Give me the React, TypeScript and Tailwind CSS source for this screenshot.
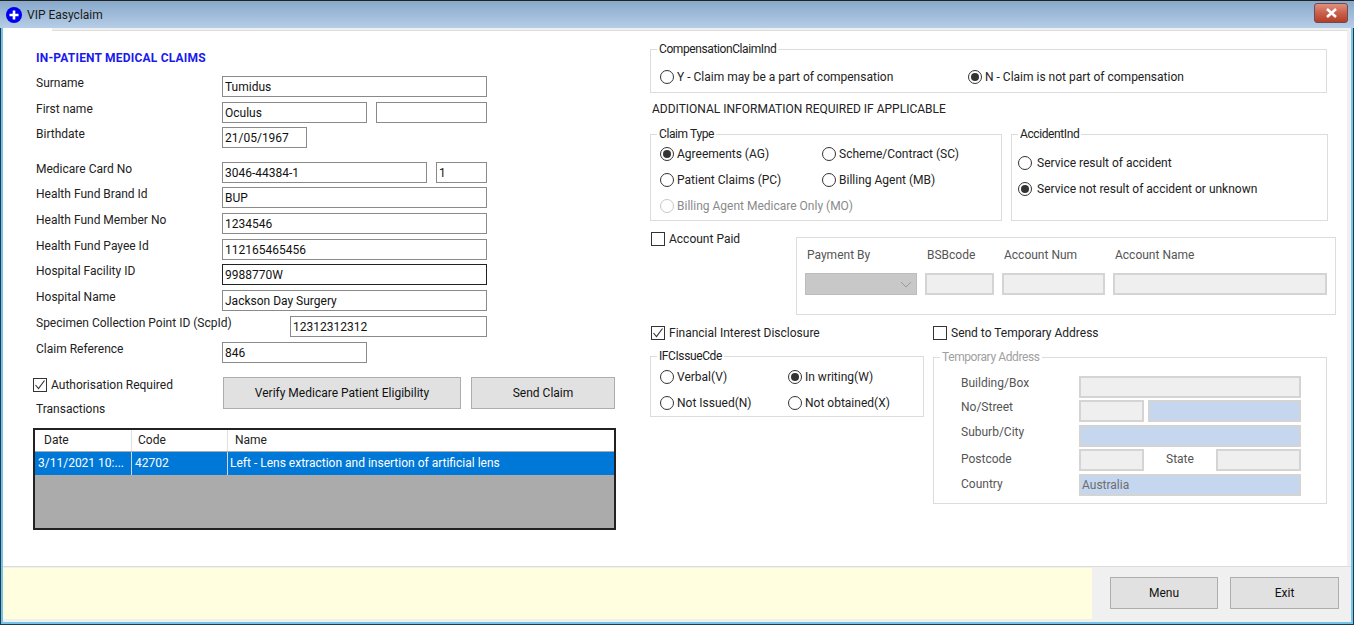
import React from "react";

const Field = ({ w, value = "", strong = false }: { w: string; value?: string; strong?: boolean }) => (
  <div className={`${w} h-[21px] shrink-0 border ${strong ? "border-[#222]" : "border-[#8a8a8a]"} pl-[2px] leading-[20px] text-[12px] text-[#111] bg-white overflow-hidden whitespace-nowrap`}>
    {value}
  </div>
);

const Off = ({ w, blue = false, value = "" }: { w: string; blue?: boolean; value?: string }) => (
  <div className={`${w} h-[22px] shrink-0 border-2 border-[#d4d4d4] ${blue ? "bg-[#c5d7ef]" : "bg-[#efefef]"} pl-[1px] leading-[18px] text-[12px] text-[#6d6d6d]`}>
    {value}
  </div>
);

const Row = ({ label, mt, children, lw = "w-[187px]" }: { label: string; mt: string; children: React.ReactNode; lw?: string }) => (
  <div className={`flex h-[21px] ${mt}`}>
    <div className={`${lw} shrink-0 pl-[1px] leading-[15px] whitespace-nowrap`}>{label}</div>
    <div className="flex gap-[9px]">{children}</div>
  </div>
);

const Radio = ({ label, on = false, off = false, w, gap = "ml-[3px]" }: { label: string; on?: boolean; off?: boolean; w?: string; gap?: string }) => (
  <div className={`flex items-center h-[16px] ${w ?? ""} ${off ? "text-[#8a8a8a]" : ""}`}>
    <span className={`w-[14px] h-[14px] shrink-0 rounded-full border ${off ? "border-[#c8c8c8]" : "border-[#333]"} flex items-center justify-center`}>
      {on && <span className="w-[8px] h-[8px] rounded-full bg-[#333]" />}
    </span>
    <span className={`${gap} whitespace-nowrap`}>{label}</span>
  </div>
);

const Check = ({ label, on = false }: { label: string; on?: boolean }) => (
  <div className="flex items-center h-[15px]">
    <span className="w-[14px] h-[14px] shrink-0 border border-[#333] bg-white flex items-center justify-center">
      {on && (
        <svg width="12" height="12" viewBox="0 0 12 12" fill="none" stroke="#333" strokeWidth="1.1">
          <path d="M1.5 6 L4.5 9.5 L10.5 1.5" />
        </svg>
      )}
    </span>
    <span className="ml-[4px] whitespace-nowrap">{label}</span>
  </div>
);

const Group = ({ title, cls, children, off = false }: { title: string; cls: string; children?: React.ReactNode; off?: boolean }) => (
  <div className={`relative border border-[#dcdcdc] shrink-0 ${cls}`}>
    <span className={`absolute left-[6px] -top-[8px] bg-white px-[2px] leading-[15px] tracking-[-0.4px] whitespace-nowrap ${off ? "text-[#a0a0a0]" : ""}`}>{title}</span>
    {children}
  </div>
);

const Btn = ({ label, cls }: { label: string; cls: string }) => (
  <div className={`${cls} h-[32px] shrink-0 bg-[#e1e1e1] border border-[#adadad] flex items-center justify-center text-[12px] text-[#111]`}>{label}</div>
);

const Addr = ({ label, children, mt = "mt-[3px]", lp = "pt-0" }: { label: string; children: React.ReactNode; mt?: string; lp?: string }) => (
  <div className={`flex h-[22px] ${mt}`}>
    <div className={`w-[118px] shrink-0 leading-[15px] ${lp} text-[#555]`}>{label}</div>
    <div className="flex">{children}</div>
  </div>
);

export default function App() {
  return (
    <div className="w-[1354px] h-[625px] overflow-hidden flex flex-col bg-[#f0f0f0] text-[12px] text-[#222] border-t border-[#222]" style={{ fontFamily: "Roboto, 'Noto Sans', sans-serif" }}>
      {/* Title bar */}
      <div className="h-[27px] shrink-0 flex items-center pl-[6px] pr-[6px] bg-gradient-to-b from-[#88a9cb] to-[#b6cde6]">
        <svg width="16" height="16" viewBox="0 0 16 16" className="shrink-0">
          <circle cx="8" cy="8" r="8" fill="#0000f0" />
          <path d="M8 3.5 V12.5 M3.5 8 H12.5" stroke="#fff" strokeWidth="2.6" />
        </svg>
        <span className="ml-[5px] mt-[1px] text-[12px] text-[#1a1a1a]">VIP Easyclaim</span>
        <div className="ml-auto mt-[-3px] w-[34px] h-[20px] rounded-[3px] border border-[#6e4a55] bg-gradient-to-b from-[#e08f7f] via-[#c9604c] to-[#b43d24] flex items-center justify-center">
          <svg width="13" height="10" viewBox="0 0 13 10" stroke="#fff" strokeWidth="2.6">
            <path d="M2 1 L11 9 M11 1 L2 9" />
          </svg>
        </div>
      </div>

      {/* Body with the window edges */}
      <div className="flex-1 min-h-0 flex flex-col border-x border-b border-[#1f3b50]">
        <div className="flex-1 min-h-0 flex flex-col border-x-2 border-b-2 border-[#74c3e8]">
          <div className="h-[3px] shrink-0 flex">
            <div className="w-[49px] bg-white" />
            <div className="flex-1 border-b border-[#dedede] bg-[#f0f0f0]" />
            <div className="w-[4px]" />
          </div>
          <div className="h-[535px] shrink-0 mr-[4px] bg-white flex">
            {/* Left */}
            <div className="w-[647px] shrink-0 pl-[30px]">
              <div className="mt-[20px] ml-[3px] leading-[14px] text-[12px] font-bold tracking-[0.2px] text-[#1a1aee] whitespace-nowrap">IN-PATIENT MEDICAL CLAIMS</div>
              <div className="ml-[2px]">
                <Row label="Surname" mt="mt-[11px]"><Field w="w-[265px]" value="Tumidus" /></Row>
                <Row label="First name" mt="mt-[5px]">
                  <Field w="w-[145px]" value="Oculus" />
                  <Field w="w-[111px]" />
                </Row>
                <Row label="Birthdate" mt="mt-[4px]"><Field w="w-[85px]" value="21/05/1967" /></Row>
                <Row label="Medicare Card No" mt="mt-[14px]">
                  <Field w="w-[205px]" value="3046-44384-1" />
                  <Field w="w-[51px]" value="1" />
                </Row>
                <Row label="Health Fund Brand Id" mt="mt-[4px]"><Field w="w-[265px]" value="BUP" /></Row>
                <Row label="Health Fund Member No" mt="mt-[5px]"><Field w="w-[265px]" value="1234546" /></Row>
                <Row label="Health Fund Payee Id" mt="mt-[5px]"><Field w="w-[265px]" value="112165465456" /></Row>
                <Row label="Hospital Facility ID" mt="mt-[4px]"><Field w="w-[265px]" strong value="9988770W" /></Row>
                <Row label="Hospital Name" mt="mt-[5px]"><Field w="w-[265px]" value="Jackson Day Surgery" /></Row>
                <Row label="Specimen Collection Point ID (ScpId)" lw="w-[255px]" mt="mt-[5px]"><Field w="w-[197px]" value="12312312312" /></Row>
                <Row label="Claim Reference" mt="mt-[5px]"><Field w="w-[145px]" value="846" /></Row>
              </div>
              <div className="flex mt-[14px]">
                <div className="w-[190px] shrink-0">
                  <Check label="Authorisation Required" on />
                  <div className="mt-[10px] ml-[3px] leading-[15px]">Transactions</div>
                </div>
                <div className="flex gap-[10px]">
                  <Btn label="Verify Medicare Patient Eligibility" cls="w-[238px]" />
                  <Btn label="Send Claim" cls="w-[144px]" />
                </div>
              </div>
              <div className="mt-[11px] w-[583px] h-[102px] border-2 border-[#222] bg-[#ababab] flex flex-col">
                <div className="h-[21px] flex bg-white text-[#222] leading-[20px]">
                  <div className="w-[97px] pl-[9px] border-r border-[#e0e0e0]">Date</div>
                  <div className="w-[96px] pl-[6px] border-r border-[#e0e0e0]">Code</div>
                  <div className="flex-1 pl-[7px]">Name</div>
                </div>
                <div className="h-[23px] mt-[1px] flex bg-[#0078d7] text-white leading-[22px]">
                  <div className="w-[97px] pl-[3px] border-r border-[#d0d8e8] whitespace-nowrap">3/11/2021 10:...</div>
                  <div className="w-[96px] pl-[3px] border-r border-[#d0d8e8]">42702</div>
                  <div className="flex-1 pl-[2px] whitespace-nowrap">Left - Lens extraction and insertion of artificial lens</div>
                </div>
              </div>
            </div>

            {/* Right */}
            <div className="flex-1 min-w-0 pt-[18px]">
              <Group title="CompensationClaimInd" cls="w-[677px] h-[44px] flex items-start pl-[9px] pt-[19px]">
                <Radio label="Y - Claim may be a part of compensation" w="w-[308px]" />
                <Radio label="N - Claim is not part of compensation" on />
              </Group>
              <div className="mt-[9px] ml-[2px] leading-[15px]">ADDITIONAL INFORMATION REQUIRED IF APPLICABLE</div>
              <div className="flex gap-[9px] mt-[17px]">
                <Group title="Claim Type" cls="w-[352px] h-[87px] pl-[9px] pt-[11px]">
                  <div className="flex"><Radio label="Agreements (AG)" on w="w-[162px]" /><Radio label="Scheme/Contract (SC)" /></div>
                  <div className="flex mt-[10px]"><Radio label="Patient Claims (PC)" w="w-[162px]" /><Radio label="Billing Agent (MB)" /></div>
                  <div className="flex mt-[10px]"><Radio label="Billing Agent Medicare Only (MO)" off /></div>
                </Group>
                <Group title="AccidentInd" cls="w-[317px] h-[87px] pl-[6px] pt-[20px]">
                  <Radio label="Service result of accident" gap="ml-[5px]" />
                  <div className="mt-[10px]"><Radio label="Service not result of accident or unknown" on gap="ml-[5px]" /></div>
                </Group>
              </div>
              <div className="flex mt-[16px]">
                <div className="w-[146px] shrink-0 -mt-[6px] pl-[1px]"><Check label="Account Paid" /></div>
                <div className="w-[540px] h-[78px] shrink-0 border border-[#dcdcdc] px-[8px] pt-[10px] -mr-[20px]">
                  <div className="flex text-[#555] leading-[15px]">
                    <span className="w-[120px] pl-[2px]">Payment By</span>
                    <span className="w-[77px] pl-[2px]">BSBcode</span>
                    <span className="w-[111px] pl-[2px]">Account Num</span>
                    <span className="pl-[2px]">Account Name</span>
                  </div>
                  <div className="flex gap-[8px] mt-[10px]">
                    <div className="w-[112px] h-[22px] shrink-0 bg-[#c8c8c8] border border-[#bcbcbc] flex items-center justify-end pr-[4px]">
                      <svg width="12" height="7" viewBox="0 0 12 7" fill="none" stroke="#9a9a9a" strokeWidth="1"><path d="M1 1 L6 6 L11 1" /></svg>
                    </div>
                    <Off w="w-[69px]" />
                    <Off w="w-[103px]" />
                    <Off w="w-[214px]" />
                  </div>
                </div>
              </div>
              <div className="flex mt-[10px] pl-[1px]">
                <div className="w-[282px] shrink-0"><Check label="Financial Interest Disclosure" on /></div>
                <Check label="Send to Temporary Address" />
              </div>
              <div className="flex gap-[9px] mt-[16px] items-start">
                <Group title="IFCIssueCde" cls="w-[274px] h-[61px] pl-[9px] pt-[12px]">
                  <div className="flex"><Radio label="Verbal(V)" w="w-[128px]" /><Radio label="In writing(W)" on /></div>
                  <div className="flex mt-[10px]"><Radio label="Not Issued(N)" w="w-[128px]" /><Radio label="Not obtained(X)" /></div>
                </Group>
                <Group title="Temporary Address" off cls="w-[394px] h-[147px] mt-[1px] pl-[27px] pt-[18px]">
                  <Addr label="Building/Box" mt=""><Off w="w-[222px]" /></Addr>
                  <Addr label="No/Street" mt="mt-[2px]">
                    <Off w="w-[65px]" />
                    <div className="w-[4px]" />
                    <Off w="w-[153px]" blue />
                  </Addr>
                  <Addr label="Suburb/City"><Off w="w-[222px]" blue /></Addr>
                  <Addr label="Postcode" mt="mt-[2px]" lp="pt-[3px]">
                    <Off w="w-[65px]" />
                    <span className="w-[72px] pl-[22px] pt-[3px] leading-[15px] text-[#555]">State</span>
                    <Off w="w-[85px]" />
                  </Addr>
                  <Addr label="Country" lp="pt-[3px]"><Off w="w-[222px]" blue value="Australia" /></Addr>
                </Group>
              </div>
            </div>
          </div>

          {/* Footer */}
          <div className="h-[1px] shrink-0 bg-[#dcdcdc]" />
          <div className="flex-1 min-h-0 flex bg-[#f0f0f0]">
            <div className="w-[1089px] h-[51px] mt-[1px] shrink-0 bg-[#ffffe0]" />
            <div className="flex gap-[12px] pl-[18px] pt-[10px]">
              <Btn label="Menu" cls="w-[108px]" />
              <Btn label="Exit" cls="w-[109px]" />
            </div>
          </div>
        </div>
      </div>
    </div>
  );
}
